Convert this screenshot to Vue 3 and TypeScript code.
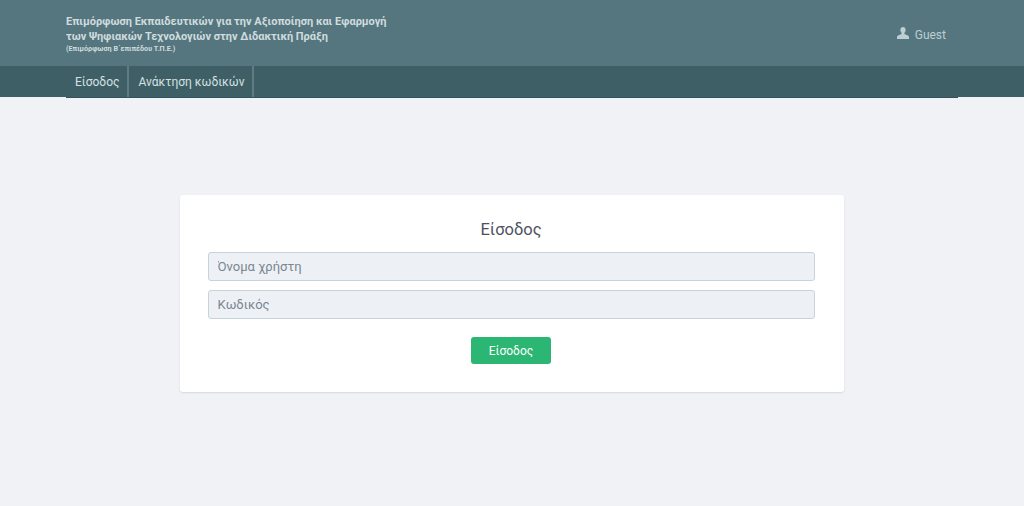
<template>
  <div class="page">
    <header class="top">
      <div class="wrap top__inner">
        <div class="brand">
          <div class="brand__title">Επιμόρφωση Εκπαιδευτικών για την Αξιοποίηση και Εφαρμογή</div>
          <div class="brand__title">των Ψηφιακών Τεχνολογιών στην Διδακτική Πράξη</div>
          <div class="brand__sub">(Επιμόρφωση Β΄επιπέδου Τ.Π.Ε.)</div>
        </div>
        <div class="user">
          <svg class="user__icon" viewBox="0 0 12 12" width="12" height="12">
            <path d="M6 0C4.400 0 3.400 1.200 3.400 3c0 1.200.5 2.300 1.200 2.900v1L1 8.400C.4 8.700 0 9.300 0 10v2h12v-2c0-.7-.4-1.300-1-1.600L7.400 6.900v-1C8.100 5.300 8.600 4.200 8.600 3 8.600 1.200 7.600 0 6 0z" fill="currentColor" />
          </svg>
          <span class="user__name">Guest</span>
        </div>
      </div>
    </header>

    <nav class="nav">
      <div class="wrap nav__inner">
        <a v-for="item in navItems" :key="item" class="nav__item">{{ item }}</a>
      </div>
    </nav>

    <main class="main">
      <form class="card" @submit.prevent>
        <h1 class="card__title">Είσοδος</h1>
        <input class="field" type="text" placeholder="Όνομα χρήστη" />
        <input class="field" type="password" placeholder="Κωδικός" />
        <button class="btn" type="submit">Είσοδος</button>
      </form>
    </main>
  </div>
</template>

<script setup lang="ts">
const navItems: string[] = ['Είσοδος', 'Ανάκτηση κωδικών'];
</script>

<style>
html,
body {
  margin: 0;
  background: #f0f2f6;
}
</style>

<style scoped>
.page {
  height: 506px;
  overflow: hidden;
  font-family: Roboto, 'Noto Sans', sans-serif;
  background: #f0f2f6;
}

.wrap {
  width: 892px;
  margin: 0 auto;
}

.top {
  height: 66px;
  background: #55767f;
}

.top__inner {
  display: flex;
  justify-content: space-between;
  box-sizing: border-box;
  padding: 14px 12px 0 0;
}

.brand__title {
  font-size: 11px;
  font-weight: 700;
  line-height: 15px;
  color: #cfdcde;
}

.brand__sub {
  font-size: 7.2px;
  font-weight: 700;
  line-height: 9px;
  color: #cfdcde;
}

.user {
  display: flex;
  align-items: center;
  gap: 6px;
  height: 12px;
  margin-top: 13px;
  font-size: 12px;
  color: #bccfd2;
}

.user__name {
  padding-top: 3px;
}

.nav {
  height: 31px;
  background: #3e5f66;
}

.nav__inner {
  display: flex;
  height: 32px;
  box-sizing: border-box;
  border-bottom: 1px solid #35535a;
}

.nav__item {
  display: flex;
  align-items: center;
  padding: 0 8px 0 9px;
  font-size: 12px;
  color: #d5e0e2;
  border-right: 2px solid #5f7c83;
}

.main {
  display: flex;
  justify-content: center;
  padding-top: 98px;
}

.card {
  display: flex;
  flex-direction: column;
  align-items: center;
  gap: 9px;
  box-sizing: border-box;
  width: 664px;
  height: 197px;
  margin-right: 1px;
  padding: 23px 29px 0 28px;
  background: #fff;
  border-radius: 3px;
  box-shadow: 0 1px 2px rgba(60, 70, 90, 0.14);
}

.card__title {
  margin: 0 0 1px;
  font-size: 16.5px;
  font-weight: 400;
  line-height: 24px;
  color: #4f5163;
}

.field {
  box-sizing: border-box;
  width: 100%;
  height: 29px;
  padding: 0 9px;
  font: inherit;
  font-size: 13px;
  background: #edf1f6;
  border: 1px solid #c5d3de;
  border-radius: 3px;
}

.field::placeholder {
  color: #7a8690;
  opacity: 1;
}

.btn {
  width: 80px;
  height: 27px;
  margin-top: 9px;
  font: inherit;
  font-size: 12px;
  color: #fff;
  background: #2bb673;
  border: none;
  border-radius: 3px;
}
</style>
